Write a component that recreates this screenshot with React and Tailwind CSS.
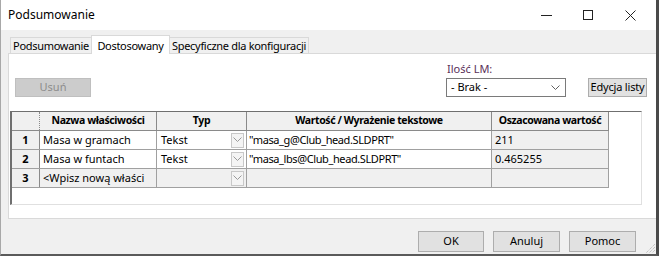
import React from "react";

const FONT = { fontFamily: '"Noto Sans", "Open Sans", sans-serif' };

function Chevron({ className = "" }) {
  return (
    <svg width="9" height="6" viewBox="0 0 9 6" className={className}>
      <polyline points="0.5,0.5 4.5,4.5 8.5,0.5" fill="none" stroke="currentColor" strokeWidth="1" />
    </svg>
  );
}

const rows = [
  { n: "1", name: "Masa w gramach", typ: "Tekst", val: '"masa_g@Club_head.SLDPRT"', est: "211" },
  { n: "2", name: "Masa w funtach", typ: "Tekst", val: '"masa_lbs@Club_head.SLDPRT"', est: "0.465255" },
  { n: "3", name: "<Wpisz nową właści", typ: "", val: "", est: "", fresh: true },
];

function TypCell({ value, fresh }) {
  return (
    <div
      className={`w-[90px] h-full flex items-center justify-between pl-1 pr-[2px] border-r border-[#a0a0a0] ${
        fresh ? "bg-[#f0f0f0]" : "bg-white"
      }`}
    >
      <span>{value}</span>
      <div className="w-[13px] h-[15px] border border-[#c8c8c8] bg-[#f4f4f4] flex items-center justify-center text-[#9a9a9a]">
        <Chevron />
      </div>
    </div>
  );
}

export default function App() {
  return (
    <div
      className="w-[659px] h-[256px] flex flex-col bg-[#f0f0f0] border-l border-[#a8a8a8] border-r-[3px] border-r-[#4a4a4a] border-b-2 border-b-[#5a5a5a] text-[11px] text-black overflow-hidden whitespace-nowrap"
      style={FONT}
    >
      {/* title bar */}
      <div className="h-[30px] bg-white flex items-center justify-between shrink-0">
        <span className="pl-[7px] text-[12px]">Podsumowanie</span>
        <div className="flex items-center h-full">
          <div className="w-[42px] h-full flex items-center justify-center">
            <div className="w-[11px] h-px bg-[#222]" />
          </div>
          <div className="w-[42px] h-full flex items-center justify-center">
            <div className="w-[10px] h-[10px] border border-[#222]" />
          </div>
          <div className="w-[42px] h-full flex items-center justify-center mr-[5px]">
            <svg width="11" height="11" viewBox="0 0 11 11">
              <path d="M0.5 0.5 L10.5 10.5 M10.5 0.5 L0.5 10.5" stroke="#222" strokeWidth="1" />
            </svg>
          </div>
        </div>
      </div>

      {/* tabs */}
      <div className="h-[23px] flex items-end pl-[9px] shrink-0 tracking-[-0.3px]">
        <div className="h-[16px] w-[81px] flex items-center justify-center border border-b-0 border-r-0 border-[#d9d9d9] bg-[#f0f0f0] leading-none">
          Podsumowanie
        </div>
        <div className="h-[19px] w-[79px] flex items-center justify-center border border-b-0 border-[#d9d9d9] bg-white leading-none relative top-px">
          Dostosowany
        </div>
        <div className="h-[16px] w-[139px] flex items-center justify-center border border-b-0 border-l-0 border-[#d9d9d9] bg-[#f0f0f0] leading-none">
          Specyficzne dla konfiguracji
        </div>
      </div>

      {/* panel */}
      <div className="ml-[7px] h-[166px] bg-white border border-[#d9d9d9] border-r-0 flex flex-col shrink-0">
        <div className="flex justify-between pt-[8px] pr-[9px]">
          <div className="pl-[6px] pt-[16px]">
            <div className="w-[76px] h-[19px] bg-[#cccccc] border border-[#bfbfbf] text-[#8c8c8c] flex items-center justify-center">
              Usuń
            </div>
          </div>
          <div className="flex flex-col">
            <span className="text-[11px] text-[#5a2f58] leading-[14px] pl-px">Ilość LM:</span>
            <div className="flex items-center gap-[22px] mt-[2px]">
              <div className="w-[120px] h-[19px] border border-[#7a7a7a] bg-white flex items-center justify-between pl-[4px] pr-[5px]">
                <span>- Brak -</span>
                <Chevron className="text-[#606060]" />
              </div>
              <div className="w-[59px] h-[19px] bg-[#e1e1e1] border border-[#adadad] flex items-center justify-center tracking-[-0.2px]">
                Edycja listy
              </div>
            </div>
          </div>
        </div>

        {/* grid */}
        <div className="ml-[1px] mt-[14px] w-[632px] h-[94px] border-t border-l-2 border-[#6f6f6f] border-r border-b border-r-[#e0e0e0] border-b-[#e0e0e0] bg-white">
          <div className="flex h-[19px] border-b border-[#8a8a8a] font-bold text-[10.5px] tracking-[-0.4px] w-[597px]">
            <div className="w-[28px] h-full bg-[#f0f0f0] border-r border-dotted border-[#8a8a8a]" />
            <div className="w-[117px] h-full bg-[#f0f0f0] border-r border-[#8a8a8a] flex items-center justify-center">
              Nazwa właściwości
            </div>
            <div className="w-[90px] h-full bg-[#f0f0f0] border-r border-[#8a8a8a] flex items-center justify-center">
              Typ
            </div>
            <div className="w-[245px] h-full bg-[#f0f0f0] border-r border-[#8a8a8a] flex items-center justify-center">
              Wartość / Wyrażenie tekstowe
            </div>
            <div className="w-[117px] h-full bg-[#f0f0f0] border-r border-[#8a8a8a] flex items-center justify-center">
              Oszacowana wartość
            </div>
          </div>
          {rows.map((r) => (
            <div key={r.n} className="flex h-[19px] border-b border-[#a0a0a0] w-[597px]">
              <div className="w-[28px] h-full bg-[#f0f0f0] border-r border-[#8a8a8a] flex items-center justify-center font-bold">
                {r.n}
              </div>
              <div
                className={`w-[117px] h-full border-r border-[#a0a0a0] flex items-center pl-[3px] overflow-hidden ${
                  r.fresh ? "bg-[#f0f0f0]" : "bg-white"
                }`}
              >
                {r.name}
              </div>
              <TypCell value={r.typ} fresh={r.fresh} />
              <div
                className={`w-[245px] h-full border-r border-[#a0a0a0] flex items-center pl-[2px] tracking-[-0.4px] ${
                  r.fresh ? "bg-[#f0f0f0]" : "bg-white"
                }`}
              >
                {r.val}
              </div>
              <div className="w-[117px] h-full border-r border-[#a0a0a0] bg-[#f0f0f0] flex items-center pl-[3px]">
                {r.est}
              </div>
            </div>
          ))}
        </div>
      </div>

      {/* bottom buttons */}
      <div className="flex-1 flex items-start justify-end pt-[12px] pr-[20px] gap-[9px] relative">
        <div className="w-[66px] h-[21px] bg-[#e1e1e1] border border-[#adadad] flex items-center justify-center">OK</div>
        <div className="w-[67px] h-[21px] bg-[#e1e1e1] border border-[#adadad] flex items-center justify-center">Anuluj</div>
        <div className="w-[67px] h-[21px] bg-[#e1e1e1] border border-[#adadad] flex items-center justify-center">Pomoc</div>
        <svg width="10" height="10" viewBox="0 0 10 10" className="absolute right-0 bottom-0">
          <path d="M9 3 L3 9 M9 6 L6 9 M9 0 L0 9" stroke="#b0b0b0" strokeWidth="1" strokeDasharray="1 1" />
        </svg>
      </div>
    </div>
  );
}
